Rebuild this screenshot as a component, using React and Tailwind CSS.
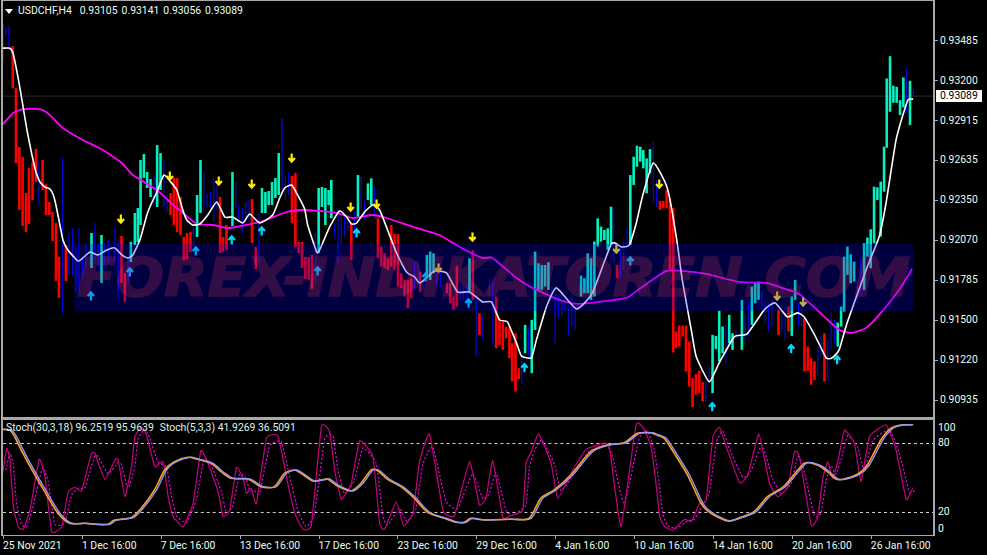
const AQUA = "#00f2c0";
const RED = "#ff0000";
const BLUE = "#0606e0";

// [x, top, bottom], read off the chart, grouped by candle colour per stretch
const crop = (ox, oy, list) =>
  list.map(([k, x, a, b]) => [k, ox + x / 3, oy + a / 3, oy + b / 3]);

const bars = [
  ["b", 3.2, 23, 60], ["b", 6, 27, 35], ["b", 9, 25, 50], ["r", 12.8, 46, 88], ["r", 16, 88, 163],
  ["r", 19.4, 147, 210], ["r", 22.6, 157, 226], ["r", 26, 193, 232], ["r", 29, 168, 224],
  ["r", 32.6, 162, 200], ["r", 36, 149, 182], ["b", 39, 162, 205], ["r", 42.6, 160, 190],
  ["r", 46, 184, 215], ["r", 49.3, 202, 215], ["r", 52.6, 212, 241], ["r", 56, 223, 281],
  ["r", 59, 257, 298], ["b", 62.6, 158, 313], ["r", 66, 245, 281], ["b", 69, 233, 275],
  ["b", 72.6, 228, 275], ["b", 76, 247, 292], ["b", 79, 228, 290], ["b", 82.6, 255, 278],
  ["b", 86, 243, 268], ["a", 91.6, 233, 268], ["b", 95, 223, 260], ["b", 98.3, 243, 267],
  ["a", 101.6, 235, 283], ["b", 105, 243, 267], ["b", 108.3, 240, 263], ["b", 115, 227, 263],
  ["b", 118.3, 240, 298], ["r", 121.6, 236, 283], ["r", 125, 273, 302], ["b", 128.3, 257, 283],
  ["a", 131, 242, 262], ["a", 135, 213, 245], ["a", 138, 208, 242], ["a", 140.7, 160, 225],
  ["a", 144, 154, 178], ["a", 147.3, 172, 188], ["a", 150.7, 179, 197], ["b", 154, 175, 205],
  ["a", 157.3, 145, 207], ["a", 160.7, 153, 190], ["b", 164, 159, 207], ["b", 167.3, 195, 212],
  ["r", 170.7, 193, 215], ["r", 174, 178, 225], ["r", 177.3, 178, 232], ["r", 180.7, 197, 235],
  ["r", 184, 237, 260], ["r", 187.3, 233, 259], ["r", 190.7, 232, 252], ["b", 194, 227, 250],
  ["a", 197.3, 195, 237], ["a", 200.7, 160, 213], ["b", 204, 172, 212], ["b", 207.3, 194, 207],
  ["b", 210.7, 192, 208], ["b", 214, 178, 222], ["b", 217.3, 182, 210], ["r", 220.3, 197, 253],
  ["r", 223.3, 237, 252], ["r", 226.7, 225, 250], ["a", 232.7, 172, 226], ["b", 236, 182, 208],
  ["b", 239, 205, 222], ["b", 242.7, 208, 233], ["b", 246, 202, 225], ["b", 249.3, 200, 222],
  ["r", 252.3, 199, 243], ["r", 256, 247, 269], ["b", 259.3, 213, 263], ["a", 262.3, 188, 213],
  ["a", 265.7, 192, 213], ["a", 269, 191, 205], ["a", 272.3, 182, 205], ["a", 275.7, 178, 198],
  ["a", 279, 153, 195], ["b", 282.3, 118, 192], ["b", 285.7, 175, 200], ["b", 289, 172, 195],
  ["r", 292.3, 176, 223], ["r", 295.7, 173, 247], ["r", 299, 242, 253], ["r", 302.3, 242, 268],
  ["r", 305.7, 257, 279], ["r", 309, 257, 280], ["r", 312.3, 255, 289], ["b", 315.7, 232, 282],
  ["a", 319, 188, 253], ["a", 322.3, 187, 207], ["a", 325.7, 188, 225], ["a", 329, 190, 205],
  ...crop(320, 130, [
    ["a", 35, 150, 265], ["b", 45, 280, 320], ["b", 55, 235, 400], ["b", 65, 260, 345], ["b", 75, 260, 320],
    ["b", 85, 255, 300], ["r", 95, 280, 390], ["b", 105, 245, 320], ["a", 115, 135, 260], ["b", 125, 140, 240],
    ["b", 135, 210, 270], ["a", 145, 160, 210], ["a", 155, 145, 225], ["b", 165, 170, 260], ["r", 175, 265, 385],
    ["r", 185, 350, 410], ["r", 195, 370, 415], ["r", 205, 385, 420], ["r", 215, 285, 410], ["r", 225, 312, 420],
    ["r", 235, 312, 470], ["r", 245, 430, 475], ["r", 255, 450, 500], ["r", 265, 450, 535], ["r", 275, 445, 505],
    ["b", 285, 395, 480], ["b", 295, 390, 470], ["r", 302, 425, 485], ["b", 312, 440, 480], ["a", 322, 375, 435],
    ["a", 332, 365, 450], ["a", 342, 370, 430], ["b", 352, 415, 470], ["b", 362, 420, 470], ["b", 372, 465, 510],
    ["r", 382, 460, 490], ["r", 392, 460, 520], ["r", 402, 500, 540], ["r", 412, 408, 530], ["b", 422, 465, 510],
    ["b", 432, 470, 510], ["b", 442, 465, 520], ["a", 450, 385, 490], ["r", 460, 360, 510], ["b", 470, 510, 680],
    ["r", 480, 550, 615], ["b", 490, 550, 630], ["b", 510, 445, 500], ["b", 520, 455, 645], ["r", 530, 500, 655],
    ["r", 540, 565, 645], ["r", 550, 575, 660], ["r", 560, 590, 625], ["r", 570, 590, 685], ["r", 578, 640, 755],
    ["r", 588, 610, 785], ["r", 598, 715, 748], ["b", 607, 680, 765], ["a", 617, 585, 670], ["b", 627, 590, 680],
    ["a", 637, 570, 730], ["a", 647, 365, 600], ["a", 657, 400, 480], ["a", 667, 405, 480], ["a", 677, 405, 470],
    ["a", 687, 397, 480], ["b", 697, 470, 510], ["b", 707, 490, 640], ["b", 717, 500, 565], ["b", 727, 490, 560],
    ["b", 737, 520, 545], ["b", 747, 530, 620], ["b", 757, 495, 590], ["b", 767, 540, 600], ["a", 785, 437, 500],
    ["a", 795, 445, 490], ["a", 805, 370, 490], ["a", 815, 385, 510], ["a", 825, 335, 500], ["a", 835, 265, 350],
    ["a", 845, 290, 335], ["a", 855, 300, 330], ["a", 865, 295, 360], ["a", 875, 230, 345], ["b", 883, 235, 400],
    ["r", 893, 405, 445], ["b", 903, 350, 445], ["b", 913, 335, 420], ["b", 923, 295, 350], ["a", 933, 135, 345],
    ["a", 943, 80, 165], ["a", 953, 47, 110],
  ]),
  ...crop(640, 130, [
    ["a", 3, 50, 95], ["a", 12, 60, 115], ["a", 22, 85, 190], ["a", 32, 57, 130], ["b", 42, 35, 220],
    ["b", 52, 150, 230], ["r", 62, 213, 240], ["r", 72, 213, 235], ["r", 82, 180, 235], ["r", 92, 205, 420],
    ["r", 102, 235, 668], ["r", 110, 605, 655], ["r", 120, 587, 650], ["r", 130, 587, 620], ["r", 140, 587, 725],
    ["r", 150, 635, 770], ["r", 160, 745, 832], ["r", 170, 733, 795], ["r", 180, 723, 790], ["r", 190, 757, 815],
    ["b", 200, 755, 815], ["b", 210, 710, 760], ["a", 220, 615, 790], ["a", 230, 618, 658], ["a", 240, 543, 695],
    ["a", 250, 590, 670], ["b", 260, 585, 700], ["a", 270, 555, 640], ["a", 280, 610, 660], ["b", 290, 600, 630],
    ["a", 308, 510, 660], ["b", 318, 550, 640], ["b", 328, 515, 620], ["a", 338, 470, 585], ["a", 348, 457, 520],
    ["a", 358, 455, 510], ["b", 368, 483, 540], ["b", 378, 515, 580], ["b", 388, 520, 605], ["b", 398, 510, 590],
    ["r", 418, 540, 615], ["b", 428, 550, 605], ["b", 438, 530, 630], ["r", 448, 530, 605], ["a", 458, 500, 618],
    ["a", 468, 450, 510], ["b", 478, 520, 590], ["b", 488, 520, 590], ["r", 496, 565, 725], ["r", 506, 650, 723],
    ["r", 516, 685, 765], ["r", 526, 695, 750], ["b", 536, 650, 740], ["b", 546, 615, 680], ["r", 556, 610, 755],
    ["b", 566, 630, 755], ["b", 576, 545, 660], ["b", 586, 570, 640], ["a", 596, 578, 650], ["a", 606, 530, 590],
    ["a", 615, 380, 545], ["a", 625, 350, 435], ["a", 635, 373, 460], ["a", 645, 395, 455], ["b", 655, 455, 520],
    ["b", 665, 390, 500], ["a", 675, 340, 480], ["a", 685, 323, 380], ["a", 695, 298, 415], ["a", 705, 170, 340],
    ["a", 715, 172, 210], ["a", 725, 155, 320], ["a", 735, 50, 185],
  ]),
  ...crop(860, 20, [
    ["a", 83, 175, 383], ["a", 93, 108, 275], ["a", 103, 197, 248], ["a", 113, 200, 248], ["a", 123, 240, 285],
    ["a", 133, 172, 262], ["b", 142, 142, 280], ["a", 153, 182, 315], ["b", 163, 205, 240],
  ]),
];

const WHITE_LINE = [
  [3, 48], [10, 48], [13, 53], [17, 72], [22, 100], [27, 130], [32, 155], [36, 172], [40, 182], [45, 187], [50, 189],
  [54, 197], [58, 215], [63, 240], [68, 250], [78, 261], [83, 258], [90, 252], [98, 255], [107, 250], [115, 248],
  [122, 255], [128, 258], [133, 255], [140, 240], [147, 215], [150, 207], [157, 192], [164, 175], [170, 181], [177, 190],
  [183, 210], [187, 220], [193, 225], [200, 224], [208, 215], [217, 202], [225, 217], [233, 217], [243, 223], [250, 214],
  [260, 223], [273, 215], [280, 198], [285, 188], [292, 185], [298, 195], [305, 209], [308, 225], [317, 252], [320, 250],
  [330, 227], [340, 211], [347, 217], [352, 224], [357, 223], [365, 212], [373, 205], [380, 210], [388, 230], [397, 253],
  [407, 272], [415, 277], [420, 283], [428, 277], [435, 271], [447, 273], [458, 292], [470, 292], [483, 302], [492, 302],
  [500, 320], [508, 322], [517, 343], [522, 356], [532, 358], [537, 340], [547, 307], [557, 288], [577, 309], [593, 293],
  [612, 244], [622, 247], [630, 245], [637, 223], [643, 197], [654, 163], [668, 188], [677, 237], [683, 280], [692, 330],
  [697, 357], [710, 382], [720, 363], [735, 337], [748, 334], [765, 310], [776, 303], [788, 317], [798, 313], [805, 317],
  [817, 338], [827, 358], [833, 358], [840, 350], [848, 323], [867, 270], [880, 237], [887, 203], [897, 140], [908, 102],
  [910, 99], [914, 99],
];

const MAGENTA_LINE = [
  [3, 124], [13, 113], [23, 109], [40, 109], [50, 115], [63, 128], [83, 140], [103, 150], [122, 163], [133, 175],
  [157, 190], [168, 200], [182, 212], [197, 224], [213, 225], [230, 228], [260, 222], [287, 212], [303, 210], [320, 211],
  [337, 213], [353, 218], [373, 215], [387, 218], [417, 228], [440, 235], [460, 247], [483, 258], [493, 258], [517, 278],
  [533, 288], [560, 300], [577, 304], [600, 302], [627, 298], [640, 289], [667, 271], [683, 271], [707, 274], [740, 282],
  [767, 283], [783, 288], [800, 294], [820, 312], [840, 330], [853, 333], [867, 328], [880, 315], [900, 290], [913, 269],
];

const pts = (ox, list) => list.map(([x, y]) => [ox + x / 3, 410 + y / 3]);

const STOCH_SLOW = [
  ...pts(0, [[8, 58], [35, 60], [50, 80], [75, 130], [105, 185], [140, 245], [180, 310], [215, 340], [260, 340], [290, 343], [330, 343], [350, 330], [400, 323], [430, 295], [470, 240], [500, 180], [530, 155], [570, 142], [600, 148], [640, 160], [670, 185], [700, 205], [750, 207], [790, 230], [830, 230], [860, 190], [890, 180], [910, 190], [945, 213], [980, 208]]),
  ...pts(330, [[0, 207], [30, 228], [70, 243], [100, 220], [130, 180], [150, 182], [180, 208], [220, 230], [260, 265], [300, 307], [350, 325], [385, 337], [410, 337], [430, 325], [470, 330], [550, 328], [605, 325], [640, 265], [680, 240], [730, 195], [790, 125], [840, 105], [890, 98], [930, 70], [970, 68]]),
  ...pts(657, [[0, 72], [30, 85], [60, 130], [100, 195], [140, 280], [170, 310], [220, 333], [260, 322], [300, 305], [340, 260], [390, 228], [450, 160], [490, 165], [520, 185], [545, 207], [570, 207], [610, 193], [640, 165], [680, 90], [710, 55], [740, 45], [772, 44]]),
];

const STOCH_FAST = [
  ...pts(0, [[8, 190], [20, 115], [30, 150], [40, 290], [55, 350], [70, 358], [90, 300], [118, 148], [135, 200], [155, 365], [185, 350], [205, 245], [225, 232], [245, 243], [260, 185], [275, 130], [285, 130], [315, 208], [345, 150], [355, 150], [375, 260], [395, 170], [405, 80], [425, 50], [440, 75], [465, 170], [490, 155], [505, 260], [520, 320], [550, 350], [580, 280], [603, 122], [625, 160], [655, 245], [670, 320], [690, 300], [710, 172], [730, 205], [740, 250], [755, 235], [770, 280], [800, 85], [835, 78], [860, 200], [885, 310], [910, 358], [935, 345], [965, 50]]),
  ...pts(330, [[0, 65], [15, 180], [35, 268], [65, 220], [90, 92], [130, 140], [150, 340], [165, 358], [200, 275], [222, 348], [250, 310], [270, 155], [300, 72], [340, 300], [375, 317], [420, 155], [450, 285], [470, 262], [490, 152], [520, 322], [540, 318], [580, 300], [590, 160], [605, 125], [628, 72], [665, 160], [685, 265], [730, 180], [770, 118], [820, 100], [840, 110], [875, 350], [920, 45], [945, 58], [965, 110]]),
  ...pts(657, [[0, 230], [10, 320], [25, 350], [50, 360], [85, 328], [105, 335], [130, 280], [150, 270], [170, 80], [190, 52], [210, 110], [250, 218], [275, 195], [308, 72], [340, 220], [365, 260], [395, 230], [415, 125], [430, 140], [465, 345], [485, 320], [500, 205], [515, 155], [530, 205], [545, 155], [565, 60], [595, 100], [615, 215], [640, 80], [690, 45], [720, 120], [750, 268], [770, 235]]),
];

// signal line: fast line lagged by about a bar and flattened a little
const STOCH_SIGNAL = STOCH_FAST.map(([x, y], i, all) => [
  x + 3.2,
  (all[Math.max(i - 1, 0)][1] + 6 * y + all[Math.min(i + 1, all.length - 1)][1]) / 8,
]);

const DOWN_ARROWS = [[170, 176], [219, 181], [252, 184], [292, 158], [121, 219], [351, 207], [377, 204], [473, 237], [439, 268], [617, 249], [660, 184], [778, 296], [804, 302]];
const UP_ARROWS = [[91, 296], [130, 272], [196, 251], [232, 240], [262, 231], [318, 271], [357, 233], [426, 277], [469, 303], [525, 368], [631, 261], [713, 407], [792, 349], [838, 360]];

const PRICES = ["0.93485", "0.93200", "0.92915", "0.92635", "0.92350", "0.92070", "0.91785", "0.91500", "0.91220", "0.90935"];
const TIMES = ["25 Nov 2021", "1 Dec 16:00", "7 Dec 16:00", "13 Dec 16:00", "17 Dec 16:00", "23 Dec 16:00", "29 Dec 16:00", "4 Jan 16:00", "10 Jan 16:00", "14 Jan 16:00", "20 Jan 16:00", "26 Jan 16:00"];

function toPath(points, k = 12) {
  let d = `M${points[0][0]} ${points[0][1]}`;
  for (let i = 0; i < points.length - 1; i++) {
    const p0 = points[Math.max(i - 1, 0)];
    const p1 = points[i];
    const p2 = points[i + 1];
    const p3 = points[Math.min(i + 2, points.length - 1)];
    const c1 = [p1[0] + (p2[0] - p0[0]) / k, p1[1] + (p2[1] - p0[1]) / k];
    const c2 = [p2[0] - (p3[0] - p1[0]) / k, p2[1] - (p3[1] - p1[1]) / k];
    d += `C${c1[0].toFixed(1)} ${c1[1].toFixed(1)} ${c2[0].toFixed(1)} ${c2[1].toFixed(1)} ${p2[0].toFixed(1)} ${p2[1].toFixed(1)}`;
  }
  return d;
}

function PriceChart() {
  return (
    <svg viewBox="3 1 931 416" className="block w-full h-full">
      <line x1="3" x2="934" y1="96" y2="96" stroke="#2c2c2c" />
      {bars.map(([kind, x, top, bottom], i) => (
        <line
          key={i}
          x1={x}
          x2={x}
          y1={top}
          y2={bottom}
          stroke={kind === "a" ? AQUA : kind === "r" ? RED : BLUE}
          strokeWidth={kind === "b" ? 1.2 : 2.6}
        />
      ))}
      <path d={toPath(MAGENTA_LINE)} fill="none" stroke="#ff00ff" strokeWidth="1.8" />
      <path d={toPath(WHITE_LINE)} fill="none" stroke="#ffffff" strokeWidth="1.6" />
      {DOWN_ARROWS.map(([x, y]) => (
        <path
          key={x}
          transform={`translate(${x} ${y})`}
          d="M0 -4.5V3.5M-3.2 0L0 3.6L3.2 0"
          fill="none"
          stroke="#ffee00"
          strokeWidth="2.2"
        />
      ))}
      {UP_ARROWS.map(([x, y]) => (
        <path
          key={x}
          transform={`translate(${x} ${y})`}
          d="M0 4.5V-3.5M-3.2 0L0 -3.6L3.2 0"
          fill="none"
          stroke="#00d8f8"
          strokeWidth="2.2"
        />
      ))}
    </svg>
  );
}

function StochChart() {
  return (
    <svg viewBox="3 420 931 115" className="block w-full h-full">
      <line x1="3" x2="934" y1="443.5" y2="443.5" stroke="#d8d8d8" strokeDasharray="3 3" />
      <line x1="3" x2="934" y1="512.5" y2="512.5" stroke="#d8d8d8" strokeDasharray="3 3" />
      <path d={toPath(STOCH_SIGNAL, 14)} fill="none" stroke="#ff00ff" strokeWidth="1.1" strokeDasharray="2 2" />
      <path d={toPath(STOCH_FAST, 16)} fill="none" stroke="#c8007c" strokeWidth="1.2" />
      <path d={toPath(STOCH_SLOW.map(([x, y]) => [x - 2, y]), 8)} fill="none" stroke="#ffa020" strokeWidth="1.6" />
      <path d={toPath(STOCH_SLOW, 8)} fill="none" stroke="#9898f0" strokeWidth="1.4" />
    </svg>
  );
}

export default function App() {
  return (
    <div className="w-[987px] h-[555px] bg-black overflow-hidden text-[10.4px] leading-none text-[#e8fff4] font-['Roboto',sans-serif]">
      <div className="flex h-[420px] pl-px">
        <div className="relative w-[934px] border-t border-l-2 border-r-2 border-b-[3px] border-[#a8a8a8]">
          <PriceChart />
          <div className="absolute left-[2px] top-[5px] flex items-center">
            <svg width="8" height="5" viewBox="0 0 8 5" className="mr-[5px]">
              <path d="M0 0H8L4 5Z" fill="#ffffff" />
            </svg>
            <span className="mr-[8px]">USDCHF,H4</span>
            <span className="flex gap-[4px]">
              <span>0.93105</span>
              <span>0.93141</span>
              <span>0.93056</span>
              <span>0.93089</span>
            </span>
          </div>
          <div className="absolute left-[71px] top-[243px] w-[839px] h-[67px] bg-[#0000ff]/25 flex items-center overflow-hidden">
            <span className="ml-[3px] whitespace-nowrap italic font-bold text-[54px] origin-left scale-x-[1.05] opacity-20 text-[#ff4060] [-webkit-text-stroke:1.5px_#ff4060] font-['DejaVu_Sans',sans-serif]">
              FOREX-INDIKATOREN.COM
            </span>
          </div>
        </div>
        <div className="relative flex-1 flex flex-col pt-[21px]">
          {PRICES.map((price) => (
            <div key={price} className="h-[40.2px] flex items-center">
              <span className="w-[3px] h-px bg-[#a8a8a8]" />
              <span className="ml-[2px]">{price}</span>
            </div>
          ))}
          <div className="absolute left-px top-[90px] w-[46px] h-[12px] bg-white text-black flex items-center pl-[4px]">
            0.93089
          </div>
        </div>
      </div>

      <div className="flex h-[116px] pl-px">
        <div className="relative w-[934px] border-l-2 border-r-2 border-b border-[#a8a8a8]">
          <StochChart />
          <div className="absolute left-[3px] top-[3px] flex gap-[6px] text-[#dff5e8]">
            <span>Stoch(30,3,18) 96.2519 95.9639</span>
            <span>Stoch(5,3,3) 41.9269 36.5091</span>
          </div>
        </div>
        <div className="flex-1 flex flex-col pl-[3px] pt-px">
          <span className="h-[14px] flex items-center">100</span>
          <span className="h-[14px] mt-[2px] flex items-center">80</span>
          <span className="h-[14px] mt-[55px] flex items-center">20</span>
          <span className="h-[14px] mt-[3px] flex items-center">0</span>
        </div>
      </div>

      <div className="flex pl-[3px]">
        {TIMES.map((time) => (
          <div key={time} className="w-[78.9px] flex flex-col items-start">
            <span className="w-px h-[3px] bg-[#a8a8a8]" />
            <span className="mt-[2px] whitespace-nowrap">{time}</span>
          </div>
        ))}
      </div>
    </div>
  );
}
